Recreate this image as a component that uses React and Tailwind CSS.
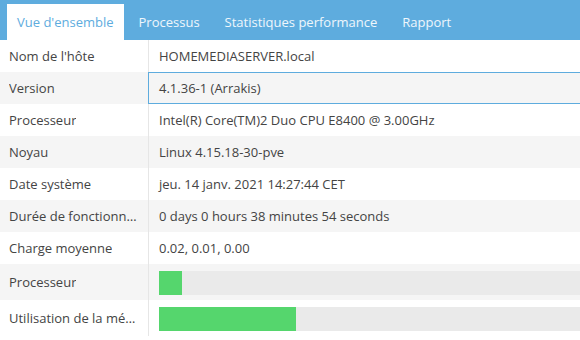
import React from 'react';

const tabs = ["Vue d'ensemble", 'Processus', 'Statistiques performance', 'Rapport'];

const rows = [
    { label: "Nom de l'hôte", value: 'HOMEMEDIASERVER.local' },
    { label: 'Version', value: '4.1.36-1 (Arrakis)', focused: true },
    { label: 'Processeur', value: 'Intel(R) Core(TM)2 Duo CPU E8400 @ 3.00GHz' },
    { label: 'Noyau', value: 'Linux 4.15.18-30-pve' },
    { label: 'Date système', value: 'jeu. 14 janv. 2021 14:27:44 CET' },
    { label: 'Durée de fonctionnement', value: '0 days 0 hours 38 minutes 54 seconds' },
    { label: 'Charge moyenne', value: '0.02, 0.01, 0.00' },
    { label: 'Processeur', bar: 23 },
    { label: 'Utilisation de la mémoire', bar: 137 },
];

export default function App() {
    return (
        <div className="h-[340px] w-[580px] overflow-hidden bg-white font-['Open_Sans',sans-serif] text-[13px] text-[#444]">
            <div className="flex h-10 items-end gap-[5px] bg-[#5eacde] pl-[7px]">
                {tabs.map((t, i) => (
                    <div
                        key={t}
                        className={`flex h-9 items-center px-[10px] pt-[1px] ${i === 0 ? 'bg-white text-[#5eacde]' : 'text-white/90'}`}
                    >
                        {t}
                    </div>
                ))}
            </div>

            {rows.map((r, i) => (
                <div key={i} className={`flex ${r.bar ? 'h-9' : 'h-8'} ${i % 2 === 1 ? 'bg-[#f5f5f5]' : 'bg-white'}`}>
                    <div className="flex w-[149px] shrink-0 items-center border-r border-[#e6e6e6] pl-[9px] pr-[8px] pt-[1px]">
                        <span className="truncate">{r.label}</span>
                    </div>
                    {r.bar ? (
                        <div className="flex flex-1 items-center pl-[10px] pt-[1px]">
                            <div className="h-6 w-full bg-[#eaeaea]">
                                <div className="h-full bg-[#55d66d]" style={{ width: r.bar }} />
                            </div>
                        </div>
                    ) : (
                        <div
                            className={`flex flex-1 items-center pt-[1px] ${r.focused ? '-ml-px -mr-1 border border-[#5eacde] pl-[10px]' : 'pl-[10px]'}`}
                        >
                            {r.value}
                        </div>
                    )}
                </div>
            ))}
        </div>
    );
}
